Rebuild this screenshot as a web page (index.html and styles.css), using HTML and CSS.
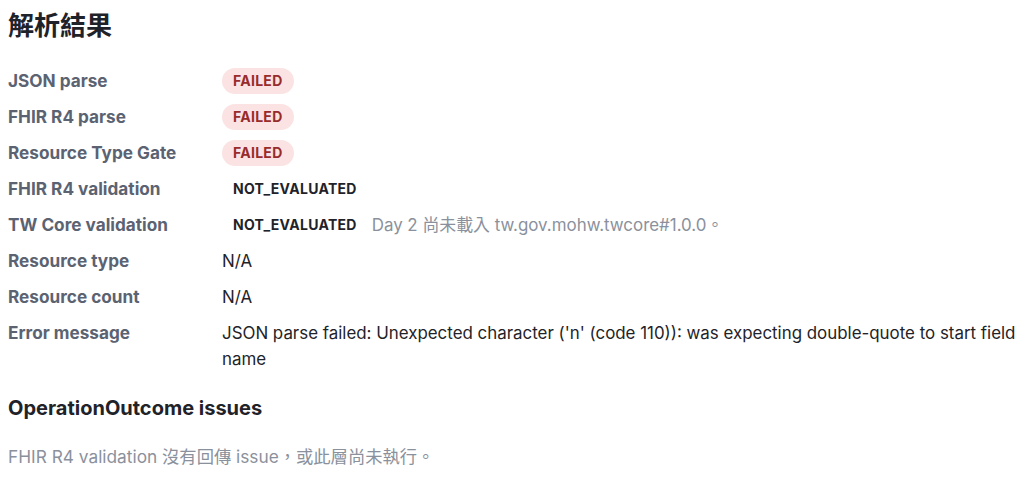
FILE: index.html
```html
<!DOCTYPE html>
<html lang="zh-Hant">
<head>
<meta charset="utf-8">
<link rel="stylesheet" href="styles.css">
</head>
<body>
<section class="result">
  <h1 class="title">解析結果</h1>
  <dl class="grid">
    <dt>JSON parse</dt>
    <dd><span class="badge failed">FAILED</span></dd>
    <dt>FHIR R4 parse</dt>
    <dd><span class="badge failed">FAILED</span></dd>
    <dt>Resource Type Gate</dt>
    <dd><span class="badge failed">FAILED</span></dd>
    <dt>FHIR R4 validation</dt>
    <dd><span class="badge neutral">NOT_EVALUATED</span></dd>
    <dt>TW Core validation</dt>
    <dd><span class="badge neutral">NOT_EVALUATED</span><span class="note">Day 2 尚未載入 tw.gov.mohw.twcore#1.0.0。</span></dd>
    <dt>Resource type</dt>
    <dd>N/A</dd>
    <dt>Resource count</dt>
    <dd>N/A</dd>
    <dt>Error message</dt>
    <dd class="message">JSON parse failed: Unexpected character ('n' (code 110)): was expecting double-quote to start field name</dd>
  </dl>
  <h2 class="subtitle">OperationOutcome issues</h2>
  <p class="muted">FHIR R4 validation 沒有回傳 issue，或此層尚未執行。</p>
</section>
</body>
</html>
```

FILE: styles.css
```css
body {
  margin: 8px;
  font-family: Inter, "Noto Sans CJK TC", sans-serif;
  color: #1f2329;
  background: #fff;
}
.title {
  font-size: 26px;
  line-height: 36px;
  font-weight: 700;
  margin: 0 0 24px;
}
.grid {
  display: grid;
  grid-template-columns: 214px 1fr;
  row-gap: 10px;
  margin: 0;
}
.grid dt {
  font-size: 17.2px;
  line-height: 26px;
  font-weight: 700;
  color: #5b6372;
}
.grid dd {
  margin: 0;
  font-size: 16.9px;
  line-height: 26px;
  color: #1f2329;
  display: flex;
  align-items: center;
  flex-wrap: wrap;
}
.grid dd.message {
  display: block;
}
.badge {
  display: inline-block;
  height: 26px;
  line-height: 26px;
  padding: 0 11px;
  border-radius: 13px;
  font-size: 14px;
  font-weight: 700;
  letter-spacing: 0.02em;
}
.failed {
  background: #fbe3e3;
  color: #982b2b;
}
.neutral {
  color: #1f2329;
}
.note {
  margin-left: 4px;
  color: #8a919c;
}
.subtitle {
  font-size: 20px;
  line-height: 27px;
  font-weight: 700;
  margin: 23px 0 0;
}
.muted {
  margin: 23px 0 0;
  font-size: 17.3px;
  line-height: 24px;
  color: #8a919c;
}
```
